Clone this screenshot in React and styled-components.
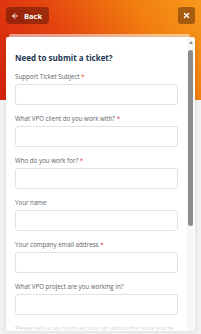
import styled, { createGlobalStyle } from 'styled-components';

const GlobalStyle = createGlobalStyle`
  html, body {
    margin: 0;
    padding: 0;
    background: #f1f1f3;
    font-family: 'Open Sans', 'Liberation Sans', sans-serif;
  }
  * {
    box-sizing: border-box;
  }
`;

const Page = styled.div`
  position: relative;
  width: 201px;
  height: 334px;
  overflow: hidden;
  background: #f1f1f3;
`;

const Hero = styled.div`
  height: 100px;
  background: linear-gradient(55deg, #d3200f 0%, #e4440f 40%, #f2800f 75%, #f7981d 100%);
  padding: 7px 6px 0 6px;
`;

const TopBar = styled.div`
  display: flex;
  justify-content: space-between;
  align-items: center;
`;

const BackButton = styled.button`
  display: flex;
  align-items: center;
  gap: 5px;
  height: 17px;
  width: 43px;
  padding: 0 0 0 5px;
  border: none;
  border-radius: 4px;
  background: rgba(70, 15, 5, 0.45);
  color: #fff;
  font-family: 'Open Sans', sans-serif;
  font-weight: 700;
  font-size: 7.5px;
  cursor: pointer;
`;

const CloseButton = styled.button`
  display: flex;
  align-items: center;
  justify-content: center;
  width: 17px;
  height: 17px;
  padding: 0;
  border: none;
  border-radius: 3px;
  background: rgba(70, 30, 5, 0.45);
  cursor: pointer;
`;

const Panel = styled.div`
  position: relative;
  margin: -66px 6px 0 6px;
  padding-top: 3px;
`;

const BackPlate = styled.div`
  position: absolute;
  top: 0;
  left: 3px;
  right: 5px;
  height: 6px;
  background: rgba(255, 255, 255, 0.55);
  border-radius: 2px 2px 0 0;
`;

const Card = styled.div`
  position: relative;
  height: 294px;
  background: #fff;
  border-radius: 2px 2px 0 0;
  box-shadow: 0 0 4px rgba(0, 0, 0, 0.12);
  overflow: hidden;
`;

const Content = styled.form`
  padding: 16px 17px 0 9px;
  display: flex;
  flex-direction: column;
`;

const Title = styled.h2`
  margin: 0 0 10px 0;
  font-size: 8px;
  line-height: 10px;
  font-weight: 700;
  color: #1d3854;
`;

const Field = styled.div`
  display: flex;
  flex-direction: column;
  gap: 3px;
  margin-bottom: 10px;
`;

const Label = styled.label`
  font-size: 6.2px;
  line-height: 8px;
  color: #5b5f66;
  white-space: nowrap;
`;

const Required = styled.span`
  color: #e0443a;
`;

const Input = styled.input`
  height: 21px;
  width: 100%;
  border: 1px solid #dfe2e6;
  border-radius: 3px;
  background: #fff;
  outline: none;
`;

const Hint = styled.p`
  margin: 0;
  font-size: 6.1px;
  line-height: 6.5px;
  color: #5b5f66;
  white-space: nowrap;
`;

const Fade = styled.div`
  position: absolute;
  left: 0;
  right: 0;
  bottom: 0;
  height: 16px;
  background: linear-gradient(rgba(255, 255, 255, 0.45), rgba(255, 255, 255, 0.75));
`;

const ScrollTrack = styled.div`
  position: absolute;
  top: 0;
  right: 1px;
  width: 7px;
  bottom: 0;
  background: #f7f7f7;
`;

const ScrollArrow = styled.div`
  position: absolute;
  top: 4px;
  left: 1.5px;
  width: 0;
  height: 0;
  border-left: 2px solid transparent;
  border-right: 2px solid transparent;
  border-bottom: 3px solid #8a8a8a;
`;

const ScrollThumb = styled.div`
  position: absolute;
  top: 13px;
  left: 1px;
  width: 5px;
  height: 176px;
  border-radius: 3px;
  background: #8c8c8c;
`;

const fields = [
  { label: 'Support Ticket Subject', required: true },
  { label: 'What VPO client do you work with?', required: true },
  { label: 'Who do you work for?', required: true },
  { label: 'Your name', required: false },
  { label: 'Your company email address', required: true },
  { label: 'What VPO project are you working in?', required: false },
];

const App = () => {
  return (
    <Page>
      <GlobalStyle />
      <Hero>
        <TopBar>
          <BackButton type="button">
            <svg width="8" height="8" viewBox="0 0 24 24" fill="none" stroke="#fff" strokeWidth="3" strokeLinecap="round" strokeLinejoin="round">
              <path d="M19 12H5" />
              <path d="M12 19l-7-7 7-7" />
            </svg>
            Back
          </BackButton>
          <CloseButton type="button" aria-label="Close">
            <svg width="7" height="7" viewBox="0 0 24 24" fill="none" stroke="#fff" strokeWidth="4.5" strokeLinecap="round">
              <path d="M5 5l14 14" />
              <path d="M19 5L5 19" />
            </svg>
          </CloseButton>
        </TopBar>
      </Hero>
      <Panel>
        <BackPlate />
        <Card>
          <Content>
            <Title>Need to submit a ticket?</Title>
            {fields.map((f) => (
              <Field key={f.label}>
                <Label>
                  {f.label}
                  {f.required && <Required> *</Required>}
                </Label>
                <Input type="text" />
              </Field>
            ))}
            <Hint>Please tell us as much as you can about the issue you're</Hint>
          </Content>
          <Fade />
          <ScrollTrack>
            <ScrollArrow />
            <ScrollThumb />
          </ScrollTrack>
        </Card>
      </Panel>
    </Page>
  );
};

export default App;
